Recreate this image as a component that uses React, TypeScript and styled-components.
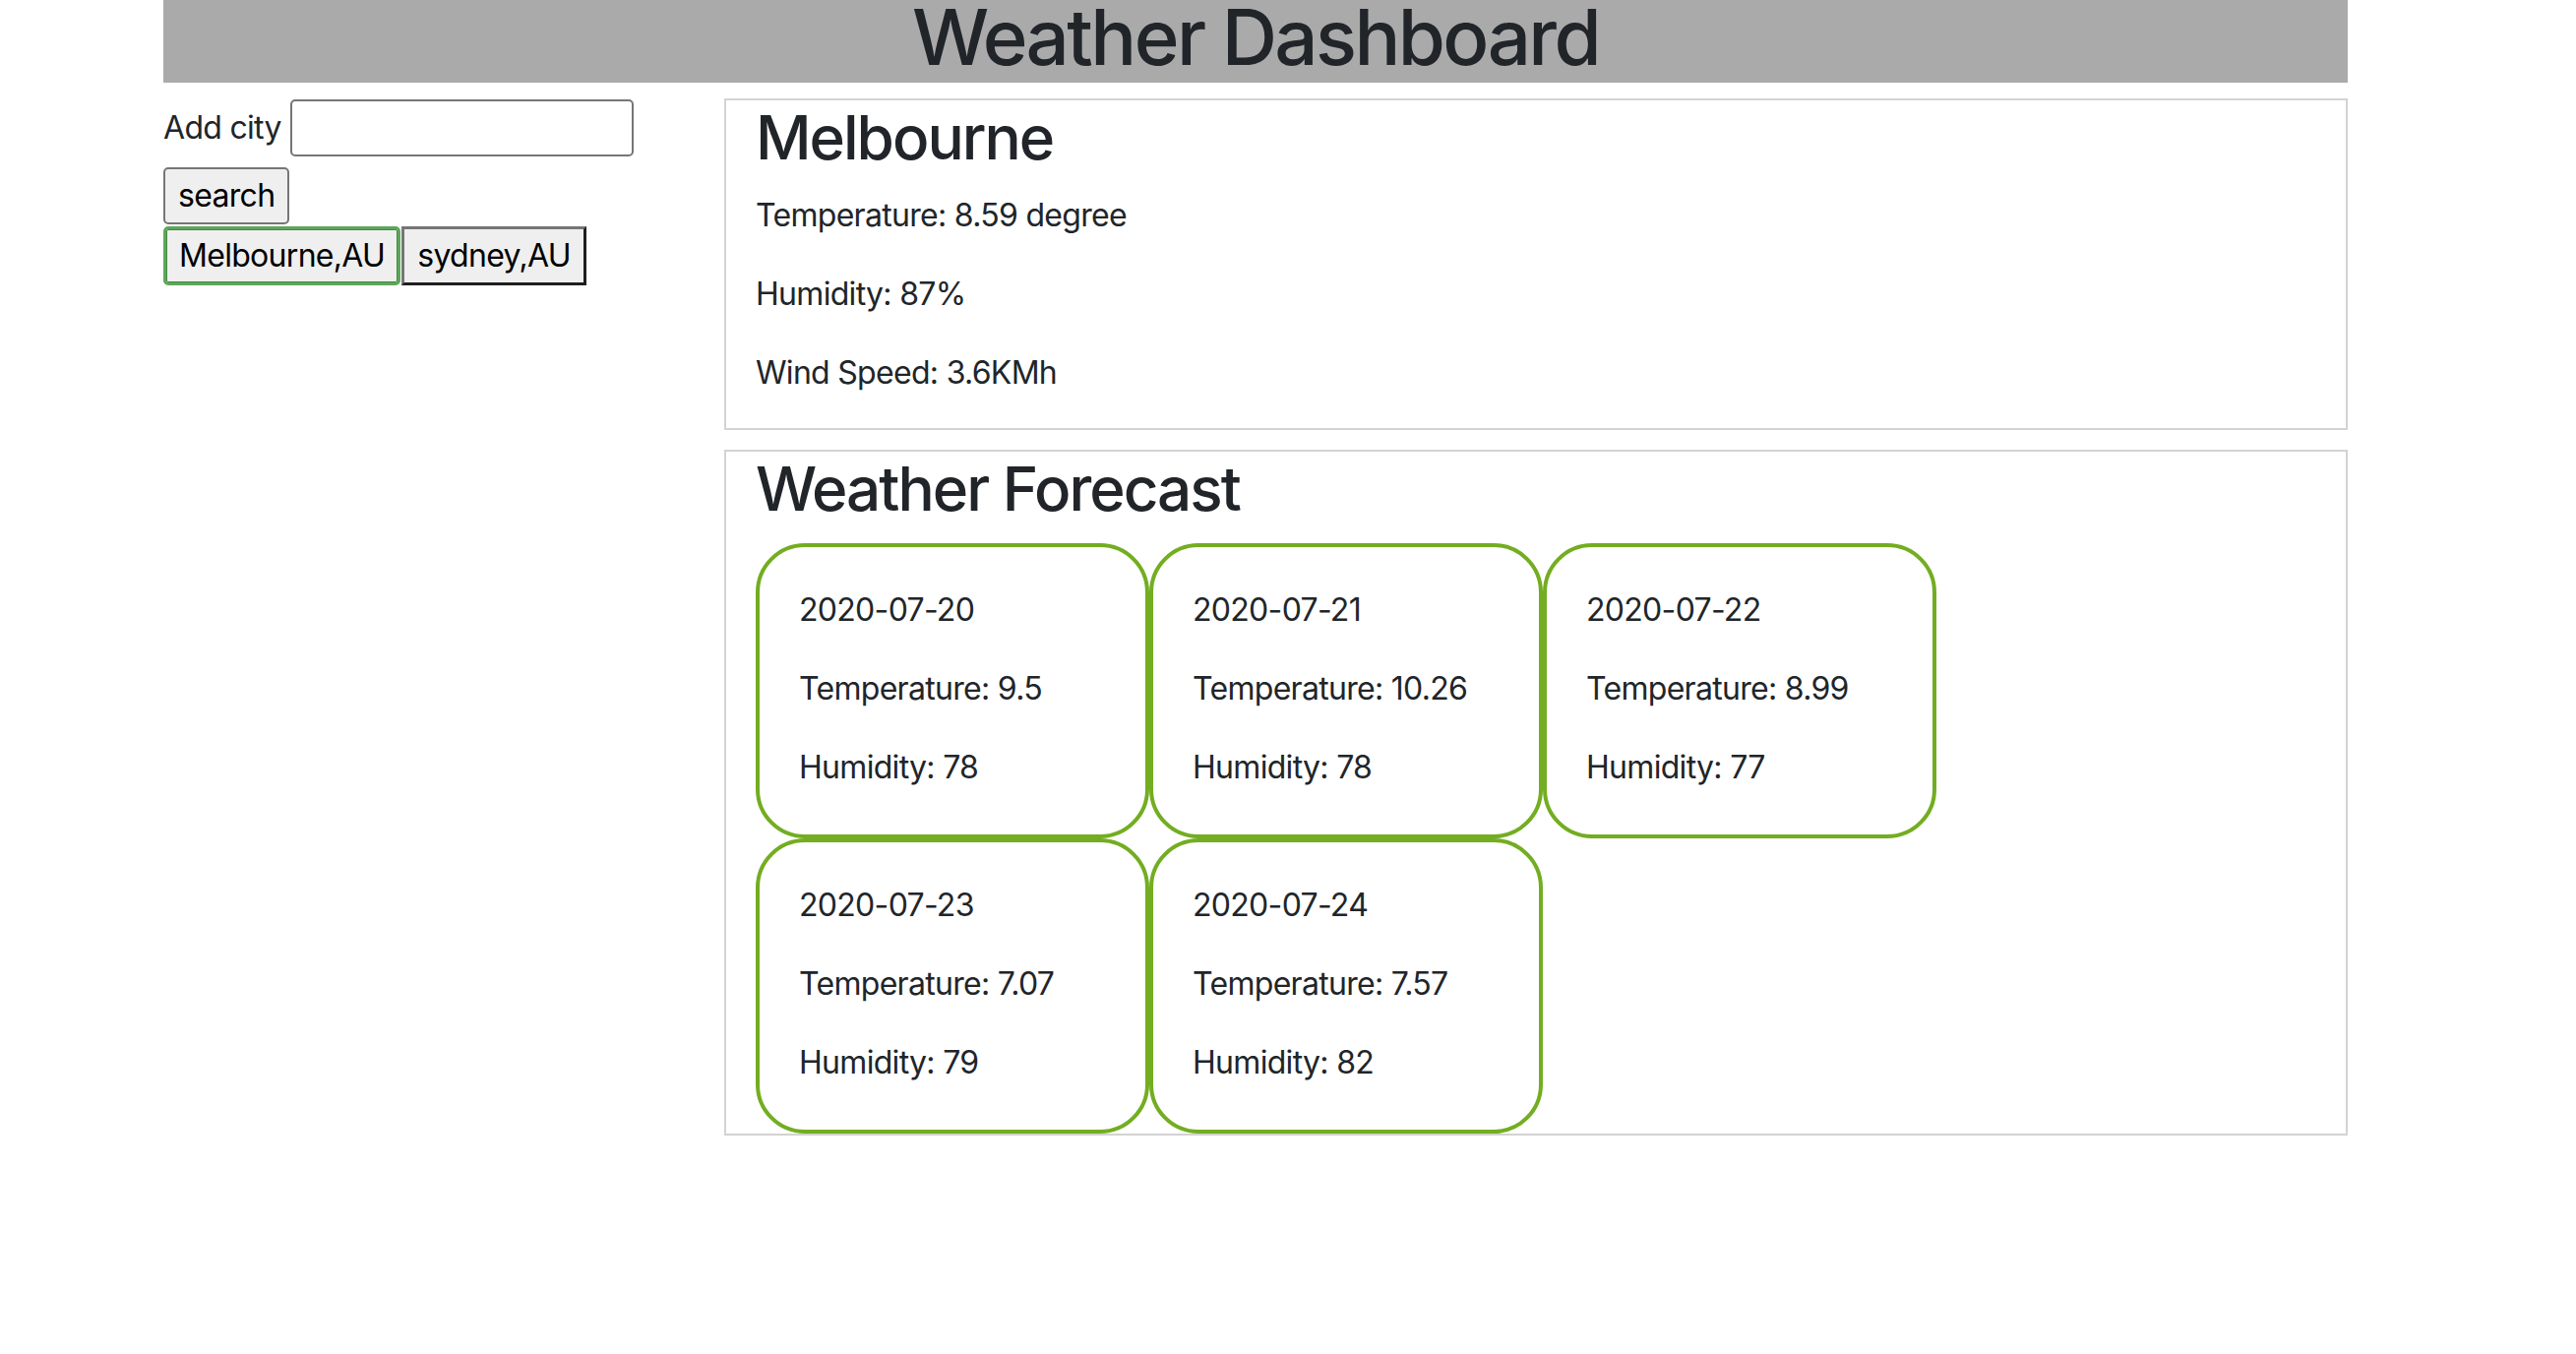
import React from "react";
import styled, { createGlobalStyle } from "styled-components";

const GlobalStyle = createGlobalStyle`
  * { box-sizing: border-box; }
  html, body { margin: 0; padding: 0; background: #ffffff; }
  body {
    font-family: Inter, "Noto Sans", "Liberation Sans", sans-serif;
    font-size: 32px;
    line-height: 1.5;
    color: #212529;
  }
`;

const Page = styled.div`
  width: 2220px;
  margin-left: 166px;
`;

const Header = styled.h1`
  margin: 0 0 16px;
  height: 84px;
  padding-bottom: 8px;
  background: #aaaaaa;
  text-align: center;
  font-size: 78px;
  font-weight: 500;
  line-height: 76px;
  letter-spacing: -2.6px;
`;

const Row = styled.div`
  display: grid;
  grid-template-columns: 540px 1650px;
  column-gap: 30px;
  align-items: start;
`;

const Sidebar = styled.div`
  display: flex;
  flex-direction: column;
  align-items: flex-start;
  padding-top: 1px;
`;

const FieldRow = styled.div`
  display: flex;
  align-items: center;
  margin-bottom: 11px;
`;

const Label = styled.label`
  font-size: 32px;
  letter-spacing: -0.7px;
  margin-right: 9px;
`;

const Input = styled.input`
  width: 349px;
  height: 58px;
  border: 2px solid #767676;
  border-radius: 5px;
  background: #ffffff;
  font: inherit;
  padding: 2px 6px;
`;

const Button = styled.button<{ $variant?: "plain" | "active" | "outset" }>`
  font-family: Inter, "Noto Sans", "Liberation Sans", sans-serif;
  font-size: 32px;
  line-height: 48px;
  letter-spacing: -0.7px;
  color: #000000;
  background: #efefef;
  padding: 3px 13px;
  margin: 0;
  cursor: pointer;
  ${(p) =>
    p.$variant === "active"
      ? `border: 3px solid #5ea65a; border-radius: 5px; box-shadow: inset 0 0 0 1px #3f8a3c;`
      : p.$variant === "outset"
      ? `border-style: solid; border-width: 3px; border-color: #767676 #1e1e1e #1e1e1e #767676; border-radius: 0;`
      : `border: 2px solid #767676; border-radius: 5px;`}
`;

const CityList = styled.div`
  display: flex;
  align-items: flex-end;
  gap: 1px;
  margin-top: 2px;
`;

const Main = styled.div`
  display: flex;
  flex-direction: column;
  gap: 20px;
`;

const Panel = styled.section`
  border: 2px solid #d3d3d3;
  padding: 0 30px;
`;

const Title = styled.h2`
  margin: 0 0 16px;
  font-size: 62px;
  font-weight: 500;
  line-height: 76.8px;
  letter-spacing: -2px;
`;

const Text = styled.p`
  margin: 0 0 32px;
  font-size: 32px;
  line-height: 48px;
  letter-spacing: -0.7px;
`;

const CardGrid = styled.div`
  display: flex;
  flex-wrap: wrap;
`;

const Card = styled.div`
  width: 400px;
  height: 300px;
  border: 4px solid #73ad21;
  border-radius: 50px;
  padding: 40px;
`;

const current = {
  city: "Melbourne",
  temp: "8.59",
  humidity: "87%",
  wind: "3.6KMh",
};

const forecast = [
  { date: "2020-07-20", temp: "9.5", humidity: "78" },
  { date: "2020-07-21", temp: "10.26", humidity: "78" },
  { date: "2020-07-22", temp: "8.99", humidity: "77" },
  { date: "2020-07-23", temp: "7.07", humidity: "79" },
  { date: "2020-07-24", temp: "7.57", humidity: "82" },
];

export default function App() {
  return (
    <>
      <GlobalStyle />
      <Page>
        <Header>Weather Dashboard</Header>
        <Row>
          <Sidebar>
            <FieldRow>
              <Label htmlFor="city">Add city</Label>
              <Input id="city" type="text" />
            </FieldRow>
            <Button $variant="plain">search</Button>
            <CityList>
              <Button $variant="active">Melbourne,AU</Button>
              <Button $variant="outset">sydney,AU</Button>
            </CityList>
          </Sidebar>
          <Main>
            <Panel>
              <Title>{current.city}</Title>
              <Text>Temperature: {current.temp} degree</Text>
              <Text>Humidity: {current.humidity}</Text>
              <Text>Wind Speed: {current.wind}</Text>
            </Panel>
            <Panel>
              <Title>Weather Forecast</Title>
              <CardGrid>
                {forecast.map((d) => (
                  <Card key={d.date}>
                    <Text>{d.date}</Text>
                    <Text>Temperature: {d.temp}</Text>
                    <Text>Humidity: {d.humidity}</Text>
                  </Card>
                ))}
              </CardGrid>
            </Panel>
          </Main>
        </Row>
      </Page>
    </>
  );
}
